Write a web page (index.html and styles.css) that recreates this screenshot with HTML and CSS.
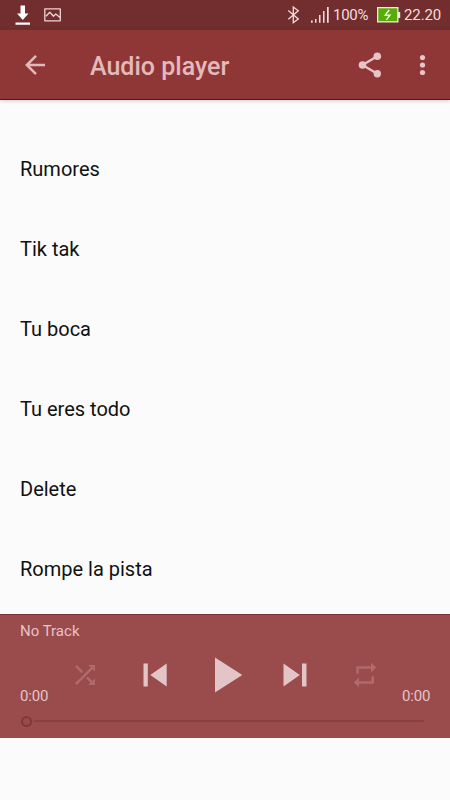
FILE: index.html
```html
<!DOCTYPE html>
<html lang="en">
<head>
<meta charset="utf-8">
<title>Audio player</title>
<link rel="stylesheet" href="styles.css">
</head>
<body>
<div class="screen">
  <div class="status">
    <svg class="notices" width="70" height="30" viewBox="0 0 70 30">
      <path fill="#fff" d="M20.500 5.500h4.500v8h3.500L22.800 20l-5.800-6.500h3.500zM15.500 22.500h14.500v2.300h-14.500z"/>
      <path fill="none" stroke="#eed6d6" stroke-width="1.300" stroke-linejoin="round" d="M44.800 8.800h15.500v12h-15.500zM46 16.200l3.800-4 3.700 4 2.300-2.200 4.200 3.500"/>
    </svg>
    <svg class="signals" width="46" height="30" viewBox="286 0 46 30">
      <path fill="none" stroke="#f3dddd" stroke-width="1.300" d="M288.300 10.500l10 8.500-5 3.700V7l5 3.700-10 8.500"/>
      <path fill="#f3dddd" d="M311 20.500h1.700v2.300H311zM315 19h1.500v3.800H315zM319 15h1.500v7.800H319zM323 11h1.500v11.800H323zM327 7h1.700v15.800H327z"/>
    </svg>
    <span class="percent">100%</span>
    <svg class="battery" width="24" height="30" viewBox="377 0 24 30">
      <path fill="#f0eadb" d="M377 7h21.500v5h1.700v6h-1.700v4.500H377z"/>
      <path fill="#56ad09" d="M378.300 8.300h18.900v12.900h-18.900z"/>
      <path fill="none" stroke="#f6ffe8" stroke-width="1.300" d="M389.200 10l-4 5.200h4.800l-3.600 4.700"/>
    </svg>
    <span class="clock">22.20</span>
  </div>
  <header class="appbar">
    <svg class="back" width="30" height="30" viewBox="0 0 30 30"><path fill="none" stroke="#e2b9bb" stroke-width="2.500" d="M25 15H7M16 5.800L6.800 15l9.200 9.200"/></svg>
    <h1 class="title">Audio player</h1>
    <svg class="share" width="30" height="30" viewBox="355 50 30 30">
      <path fill="none" stroke="#e9c3c5" stroke-width="2.300" d="M377.300 56.300L362.500 65l14.800 8.700"/>
      <g fill="#e9c3c5"><circle cx="377.300" cy="56.200" r="3.800"/><circle cx="362.500" cy="65" r="3.800"/><circle cx="377.300" cy="73.700" r="3.700"/></g>
    </svg>
    <svg class="more" width="10" height="30" viewBox="0 0 10 30"><g fill="#e9c3c5"><circle cx="5.500" cy="7.500" r="2.600"/><circle cx="5.500" cy="15" r="2.600"/><circle cx="5.500" cy="22.500" r="2.600"/></g></svg>
  </header>
  <ul class="tracks">
    <li>Rumores</li>
    <li>Tik tak</li>
    <li>Tu boca</li>
    <li>Tu eres todo</li>
    <li>Delete</li>
    <li>Rompe la pista</li>
  </ul>
  <section class="player">
    <div class="now">No Track</div>
    <div class="controls">
      <span class="time">0:00</span>
      <svg class="mode" width="70" height="60" viewBox="50 645 70 60"><path fill="none" stroke="#b16a6b" stroke-width="2.400" d="M75.900 665.800l6.600 6.600M75.900 684.200l17-17M87 677.400l6 6"/><path fill="#b16a6b" d="M88.200 665H95v6.800zM95 678.200V685h-6.800z"/></svg>
      <svg width="70" height="60" viewBox="120 645 70 60"><path fill="#e3c5c8" d="M143.500 663.500h4.300v23h-4.300zM166.700 663.500v23L150.300 675z"/></svg>
      <svg width="70" height="60" viewBox="190 645 70 60"><path fill="#e3c5c8" d="M215 657.500v35l27.300-17.500z"/></svg>
      <svg width="70" height="60" viewBox="260 645 70 60"><path fill="#e3c5c8" d="M283.500 663.500v23l16.300-11.500zM302 663.500h4.500v23H302z"/></svg>
      <svg class="mode" width="70" height="60" viewBox="330 645 70 60"><path fill="none" stroke="#b16a6b" stroke-width="2.500" d="M357.500 673.800v-6.300H372M372.700 676.200v6.300H358"/><path fill="#b16a6b" d="M371 662.500l5.200 5-5.200 5zM359 677.500l-5.200 5 5.200 5z"/></svg>
      <span class="time end">0:00</span>
    </div>
    <div class="seek"><span class="thumb"></span><span class="rail"></span></div>
  </section>
</div>
</body>
</html>
```
FILE: styles.css
```css
* { box-sizing: border-box; }
body { margin: 0; font-family: Roboto, "Liberation Sans", sans-serif; }
svg { display: block; flex: none; }
.screen {
  width: 450px;
  height: 800px;
  overflow: hidden;
  background: #fbfbfb;
}
.status {
  display: flex;
  align-items: center;
  height: 30px;
  background: #722d2e;
  color: #f3dfdf;
  font-size: 15px;
  letter-spacing: -.3px;
  line-height: 32px;
}
.signals { margin-left: auto; }
.percent { width: 45px; padding-left: 1px; }
.clock { width: 49px; padding-left: 3px; letter-spacing: -.1px; }
.appbar {
  display: flex;
  align-items: center;
  height: 70px;
  padding-left: 20px;
  background: #8f3737;
  border-bottom: 1px solid #6d0b0e;
  box-shadow: 0 1px 4px rgba(0, 0, 0, .18);
}
.title {
  flex: 1;
  margin: 5px 0 0 40px;
  color: #e5b9bb;
  font-size: 25px;
  font-weight: 500;
  line-height: 30px;
}
.more { margin: 0 23px 0 32px; }
.tracks {
  height: 514px;
  margin: 0;
  padding: 29px 20px 0;
  overflow: hidden;
  list-style: none;
  color: #111;
  font-size: 20px;
}
.tracks li { height: 80px; line-height: 80px; }
.player {
  height: 124px;
  background: #9a4b4c;
  border-top: 1px solid #7c3034;
  border-bottom: 1px solid #a34b50;
  color: #e6c3c5;
  font-size: 15px;
}
.now { height: 30px; padding-left: 20px; line-height: 32px; }
.controls { display: flex; height: 60px; }
.time { width: 50px; padding-left: 20px; align-self: flex-end; line-height: 20px; margin-bottom: -1px; letter-spacing: -.2px; }
.time.end { padding-left: 2px; }
.seek { display: flex; align-items: center; height: 32px; padding: 0 26px 0 21px; }
.thumb { width: 11px; height: 11px; border: 2.500px solid #7f393a; border-radius: 50%; }
.rail { flex: 1; height: 2.500px; margin-left: 2px; background: #894142; }
```
